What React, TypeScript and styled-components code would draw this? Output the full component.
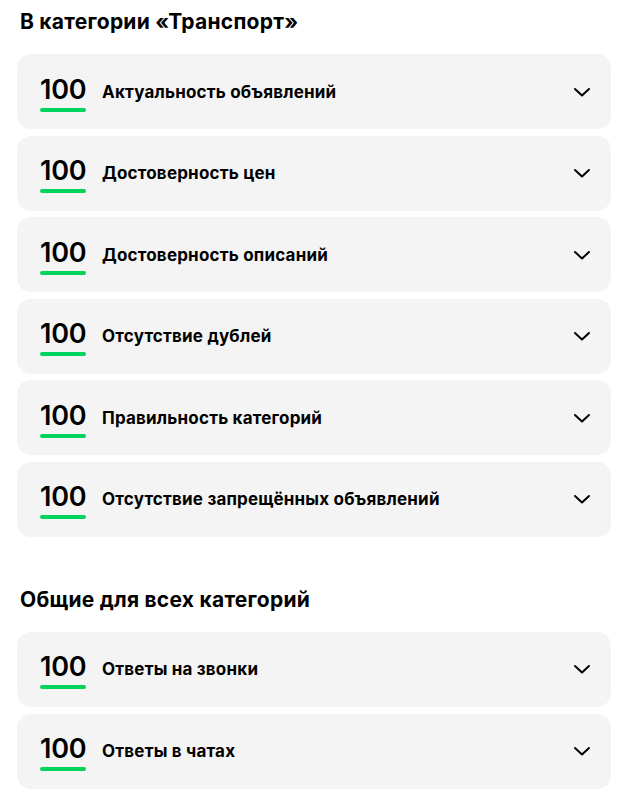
import React from 'react';
import styled, { createGlobalStyle } from 'styled-components';

const GlobalStyle = createGlobalStyle`
  body {
    margin: 0;
    background: #ffffff;
    font-family: Inter, 'Noto Sans', Arial, sans-serif;
    color: #000000;
  }
`;

const Page = styled.div`
  padding: 10px 32px 14px 17px;
  display: flex;
  flex-direction: column;
`;

const Section = styled.section<{ $first?: boolean }>`
  margin-top: ${(p) => (p.$first ? '0' : '51px')};
`;

const SectionTitle = styled.h2`
  margin: 0 0 20px 3px;
  font-size: 21px;
  line-height: 24px;
  font-weight: 700;
  letter-spacing: 0.25px;
`;

const List = styled.div`
  display: flex;
  flex-direction: column;
  gap: 6.6px;
`;

const Card = styled.div`
  height: 75px;
  box-sizing: border-box;
  background: #f4f4f4;
  border-radius: 14px;
  display: flex;
  align-items: center;
  padding: 0 17px 0 23px;
`;

const Score = styled.div`
  display: flex;
  flex-direction: column;
  align-items: stretch;
  width: 46px;
  margin-top: 5px;
`;

const ScoreValue = styled.span`
  font-size: 27px;
  line-height: 26px;
  font-weight: 600;
  letter-spacing: -0.2px;
  color: #000000;
`;

const ScoreBar = styled.span`
  display: block;
  height: 4px;
  margin-top: 5px;
  border-radius: 2px;
  background: #00d45c;
`;

const Label = styled.span`
  flex: 1;
  margin-left: 16px;
  font-size: 17px;
  line-height: 20px;
  font-weight: 700;
  letter-spacing: 0.2px;
`;

const Chevron = styled.svg`
  width: 24px;
  height: 24px;
  flex-shrink: 0;
`;

const ChevronIcon = () => (
  <Chevron viewBox="0 0 24 24" fill="none">
    <path d="M5 9l7 6.5L19 9" stroke="#000" strokeWidth="2" strokeLinecap="round" strokeLinejoin="round" />
  </Chevron>
);

const transport = [
  'Актуальность объявлений',
  'Достоверность цен',
  'Достоверность описаний',
  'Отсутствие дублей',
  'Правильность категорий',
  'Отсутствие запрещённых объявлений',
];

const common = ['Ответы на звонки', 'Ответы в чатах'];

const Row = ({ label }: { label: string }) => (
  <Card>
    <Score>
      <ScoreValue>100</ScoreValue>
      <ScoreBar />
    </Score>
    <Label>{label}</Label>
    <ChevronIcon />
  </Card>
);

export default function App() {
  return (
    <>
      <GlobalStyle />
      <Page>
        <Section $first>
          <SectionTitle>В категории «Транспорт»</SectionTitle>
          <List>
            {transport.map((t) => (
              <Row key={t} label={t} />
            ))}
          </List>
        </Section>
        <Section>
          <SectionTitle>Общие для всех категорий</SectionTitle>
          <List>
            {common.map((t) => (
              <Row key={t} label={t} />
            ))}
          </List>
        </Section>
      </Page>
    </>
  );
}
